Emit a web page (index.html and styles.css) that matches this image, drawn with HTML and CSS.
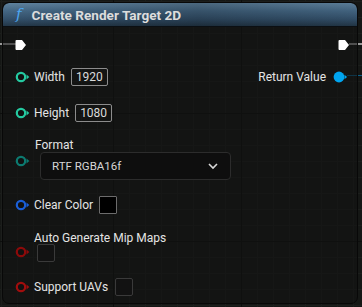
FILE: index.html
```html
<!DOCTYPE html>
<html lang="en">
<head>
    <meta charset="UTF-8">
    <title>Create Render Target 2D</title>
    <link rel="stylesheet" href="styles.css">
</head>
<body>
    <div class="wire wire-left"></div>
    <div class="wire wire-right"></div>
    <div class="wire wire-return"></div>

    <div class="node">
        <div class="node-header">
            <span class="fn-icon">f</span>
            <span class="node-title">Create Render Target 2D</span>
        </div>

        <div class="node-body">
            <!-- exec pins -->
            <div class="row exec-row">
                <svg class="exec-pin" width="12" height="12" viewBox="0 0 12 12">
                    <path d="M1.5 1h5.5l4 5-4 5h-5.5a1 1 0 0 1-1-1v-8a1 1 0 0 1 1-1z" fill="#fff"/>
                </svg>
                <svg class="exec-pin" width="12" height="12" viewBox="0 0 12 12">
                    <path d="M1.5 1h5.5l4 5-4 5h-5.5a1 1 0 0 1-1-1v-8a1 1 0 0 1 1-1z" fill="#fff"/>
                </svg>
            </div>

            <div class="row width-row">
                <div class="pin-line">
                    <svg class="pin" width="16" height="12" viewBox="0 0 16 12">
                        <circle cx="6" cy="6" r="4.2" fill="#111" stroke="#24c9a0" stroke-width="2.2"/>
                        <path d="M11.5 3.6l2.8 2.4-2.8 2.4z" fill="#24c9a0"/>
                    </svg>
                    <span class="label">Width</span>
                    <span class="value-box">1920</span>
                </div>
                <div class="pin-line out">
                    <span class="label">Return Value</span>
                    <svg class="pin" width="16" height="12" viewBox="0 0 16 12">
                        <circle cx="6" cy="6" r="5.4" fill="#00a5f0"/>
                        <path d="M11.5 3.8l2.6 2.2-2.6 2.2z" fill="#00a5f0"/>
                    </svg>
                </div>
            </div>

            <div class="row height-row">
                <div class="pin-line">
                    <svg class="pin" width="16" height="12" viewBox="0 0 16 12">
                        <circle cx="6" cy="6" r="4.2" fill="#111" stroke="#24c9a0" stroke-width="2.2"/>
                        <path d="M11.5 3.6l2.8 2.4-2.8 2.4z" fill="#24c9a0"/>
                    </svg>
                    <span class="label">Height</span>
                    <span class="value-box">1080</span>
                </div>
            </div>

            <div class="row format-row">
                <svg class="pin pin-format" width="16" height="12" viewBox="0 0 16 12">
                    <circle cx="6" cy="6" r="4.2" fill="#111" stroke="#0c7a70" stroke-width="2.2"/>
                    <path d="M11.5 3.6l2.8 2.4-2.8 2.4z" fill="#0c7a70"/>
                </svg>
                <div class="stacked">
                    <span class="label">Format</span>
                    <div class="dropdown">
                        <span>RTF RGBA16f</span>
                        <svg width="12" height="8" viewBox="0 0 12 8">
                            <path d="M2 2l4 4 4-4" fill="none" stroke="#d8d8d8" stroke-width="1.6"/>
                        </svg>
                    </div>
                </div>
            </div>

            <div class="row color-row">
                <div class="pin-line">
                    <svg class="pin" width="16" height="12" viewBox="0 0 16 12">
                        <circle cx="6" cy="6" r="4.2" fill="#111" stroke="#1a5ed6" stroke-width="2.2"/>
                        <path d="M11.5 3.6l2.8 2.4-2.8 2.4z" fill="#1a5ed6"/>
                    </svg>
                    <span class="label">Clear Color</span>
                    <span class="swatch"></span>
                </div>
            </div>

            <div class="row mip-row">
                <svg class="pin pin-mip" width="16" height="12" viewBox="0 0 16 12">
                    <circle cx="6" cy="6" r="4.2" fill="#111" stroke="#8c0a0a" stroke-width="2.2"/>
                    <path d="M11.5 3.6l2.8 2.4-2.8 2.4z" fill="#8c0a0a"/>
                </svg>
                <div class="stacked">
                    <span class="label">Auto Generate Mip Maps</span>
                    <span class="checkbox"></span>
                </div>
            </div>

            <div class="row uav-row">
                <div class="pin-line">
                    <svg class="pin" width="16" height="12" viewBox="0 0 16 12">
                        <circle cx="6" cy="6" r="4.2" fill="#111" stroke="#a00d0d" stroke-width="2.2"/>
                        <path d="M11.5 3.6l2.8 2.4-2.8 2.4z" fill="#a00d0d"/>
                    </svg>
                    <span class="label">Support UAVs</span>
                    <span class="checkbox"></span>
                </div>
            </div>
        </div>
    </div>
</body>
</html>
```

FILE: styles.css
```css
:root {
    --grid-bg: #151715;
    --grid-line: #1c1e1c;
    --grid-major: #0d0e0d;
    --text-color: #e4e4e4;
}

html, body {
    margin: 0;
    padding: 0;
}

body {
    width: 362px;
    height: 307px;
    overflow: hidden;
    position: relative;
    font-family: Roboto, "Noto Sans", sans-serif;
    color: var(--text-color);
    background-color: var(--grid-bg);
    background-image:
        linear-gradient(to right, var(--grid-major) 1px, transparent 1px),
        linear-gradient(to bottom, var(--grid-major) 1px, transparent 1px),
        linear-gradient(to right, var(--grid-line) 1px, transparent 1px),
        linear-gradient(to bottom, var(--grid-line) 1px, transparent 1px);
    background-size: 128px 128px, 128px 128px, 16px 16px, 16px 16px;
    background-position: 113px 113px, 113px 113px, 1px 1px, 1px 1px;
}

/* wires leaving the node */
.wire {
    position: absolute;
    height: 2px;
    background: #9a9a9a;
}

.wire-left {
    left: 0;
    top: 43px;
    width: 16px;
}

.wire-right {
    left: 349px;
    top: 43px;
    width: 13px;
}

.wire-return {
    left: 347px;
    top: 75px;
    width: 15px;
    height: 1px;
    background: #0a5e88;
}

.node {
    position: relative;
    margin: 2px 0 0 2px;
    width: 356px;
    height: 302px;
    border: 1px solid #080808;
    border-radius: 7px;
    background: rgba(18, 19, 18, 0.55);
    box-sizing: border-box;
    overflow: hidden;
}

.node-header {
    height: 23px;
    display: flex;
    align-items: center;
    gap: 10px;
    padding-left: 13px;
    border-radius: 6px 6px 0 0;
    background:
        linear-gradient(to right, rgba(0, 0, 0, 0) 0%, rgba(0, 0, 0, 0.2) 55%, rgba(0, 0, 0, 0.05) 100%),
        linear-gradient(to bottom, #5f839f 0%, #446683 35%, #33506a 70%, #233748 100%);
    border-bottom: 1px solid #0b0f13;
}

.fn-icon {
    font-family: "DejaVu Serif", serif;
    font-style: italic;
    font-size: 15px;
    color: #4da6f0;
    line-height: 1;
}

.node-title {
    font-size: 13.6px;
    font-weight: 700;
    color: #dcdcdc;
}

.node-body {
    position: relative;
    display: flex;
    flex-direction: column;
}

.row {
    display: flex;
    align-items: center;
    justify-content: space-between;
    padding: 0 8px 0 12px;
}

.pin-line {
    display: flex;
    align-items: center;
    gap: 3px;
}

.pin-line.out {
    gap: 4px;
}

.label {
    font-size: 12px;
    line-height: 14px;
    color: var(--text-color);
}

.pin-line .label {
    margin-right: 3px;
}

.exec-row {
    margin-top: 12px;
    padding: 0 7px 0 12px;
    height: 12px;
}

.width-row {
    margin-top: 17px;
    height: 18px;
}

.height-row {
    margin-top: 18px;
    height: 18px;
}

.value-box {
    font-size: 12px;
    line-height: 14px;
    padding: 1px 4px 1px 4px;
    border: 1px solid #8c8c8c;
    border-radius: 2px;
    color: #dadada;
}

.format-row {
    margin-top: 16px;
    align-items: flex-start;
    justify-content: flex-start;
    gap: 9px;
}

.pin-format {
    margin-top: 17px;
}

.stacked {
    display: flex;
    flex-direction: column;
    gap: 0;
}

.format-row .label {
    margin-left: -5px;
}

.dropdown {
    width: 191px;
    height: 28px;
    box-sizing: border-box;
    padding: 0 11px 0 11px;
    display: flex;
    align-items: center;
    justify-content: space-between;
    background: #0e0e0e;
    border: 1px solid #2c2c2c;
    border-radius: 4px;
    font-size: 11.5px;
    color: #d6d6d6;
}

.color-row {
    margin-top: 16px;
    height: 18px;
    justify-content: flex-start;
}

.swatch {
    width: 16px;
    height: 16px;
    background: #000;
    border: 1px solid #6c6c6c;
    border-radius: 1px;
}

.mip-row {
    margin-top: 17px;
    align-items: flex-start;
    justify-content: flex-start;
    gap: 3px;
}

.pin-mip {
    margin-top: 15px;
}

.checkbox {
    width: 16px;
    height: 16px;
    background: #121212;
    border: 1px solid #3a3a3a;
    border-radius: 2px;
}

.mip-row .checkbox {
    margin: -1px 0 0 3px;
}

.uav-row {
    margin-top: 16px;
    height: 18px;
    justify-content: flex-start;
}

.uav-row .checkbox {
    margin-left: 1px;
}
```
